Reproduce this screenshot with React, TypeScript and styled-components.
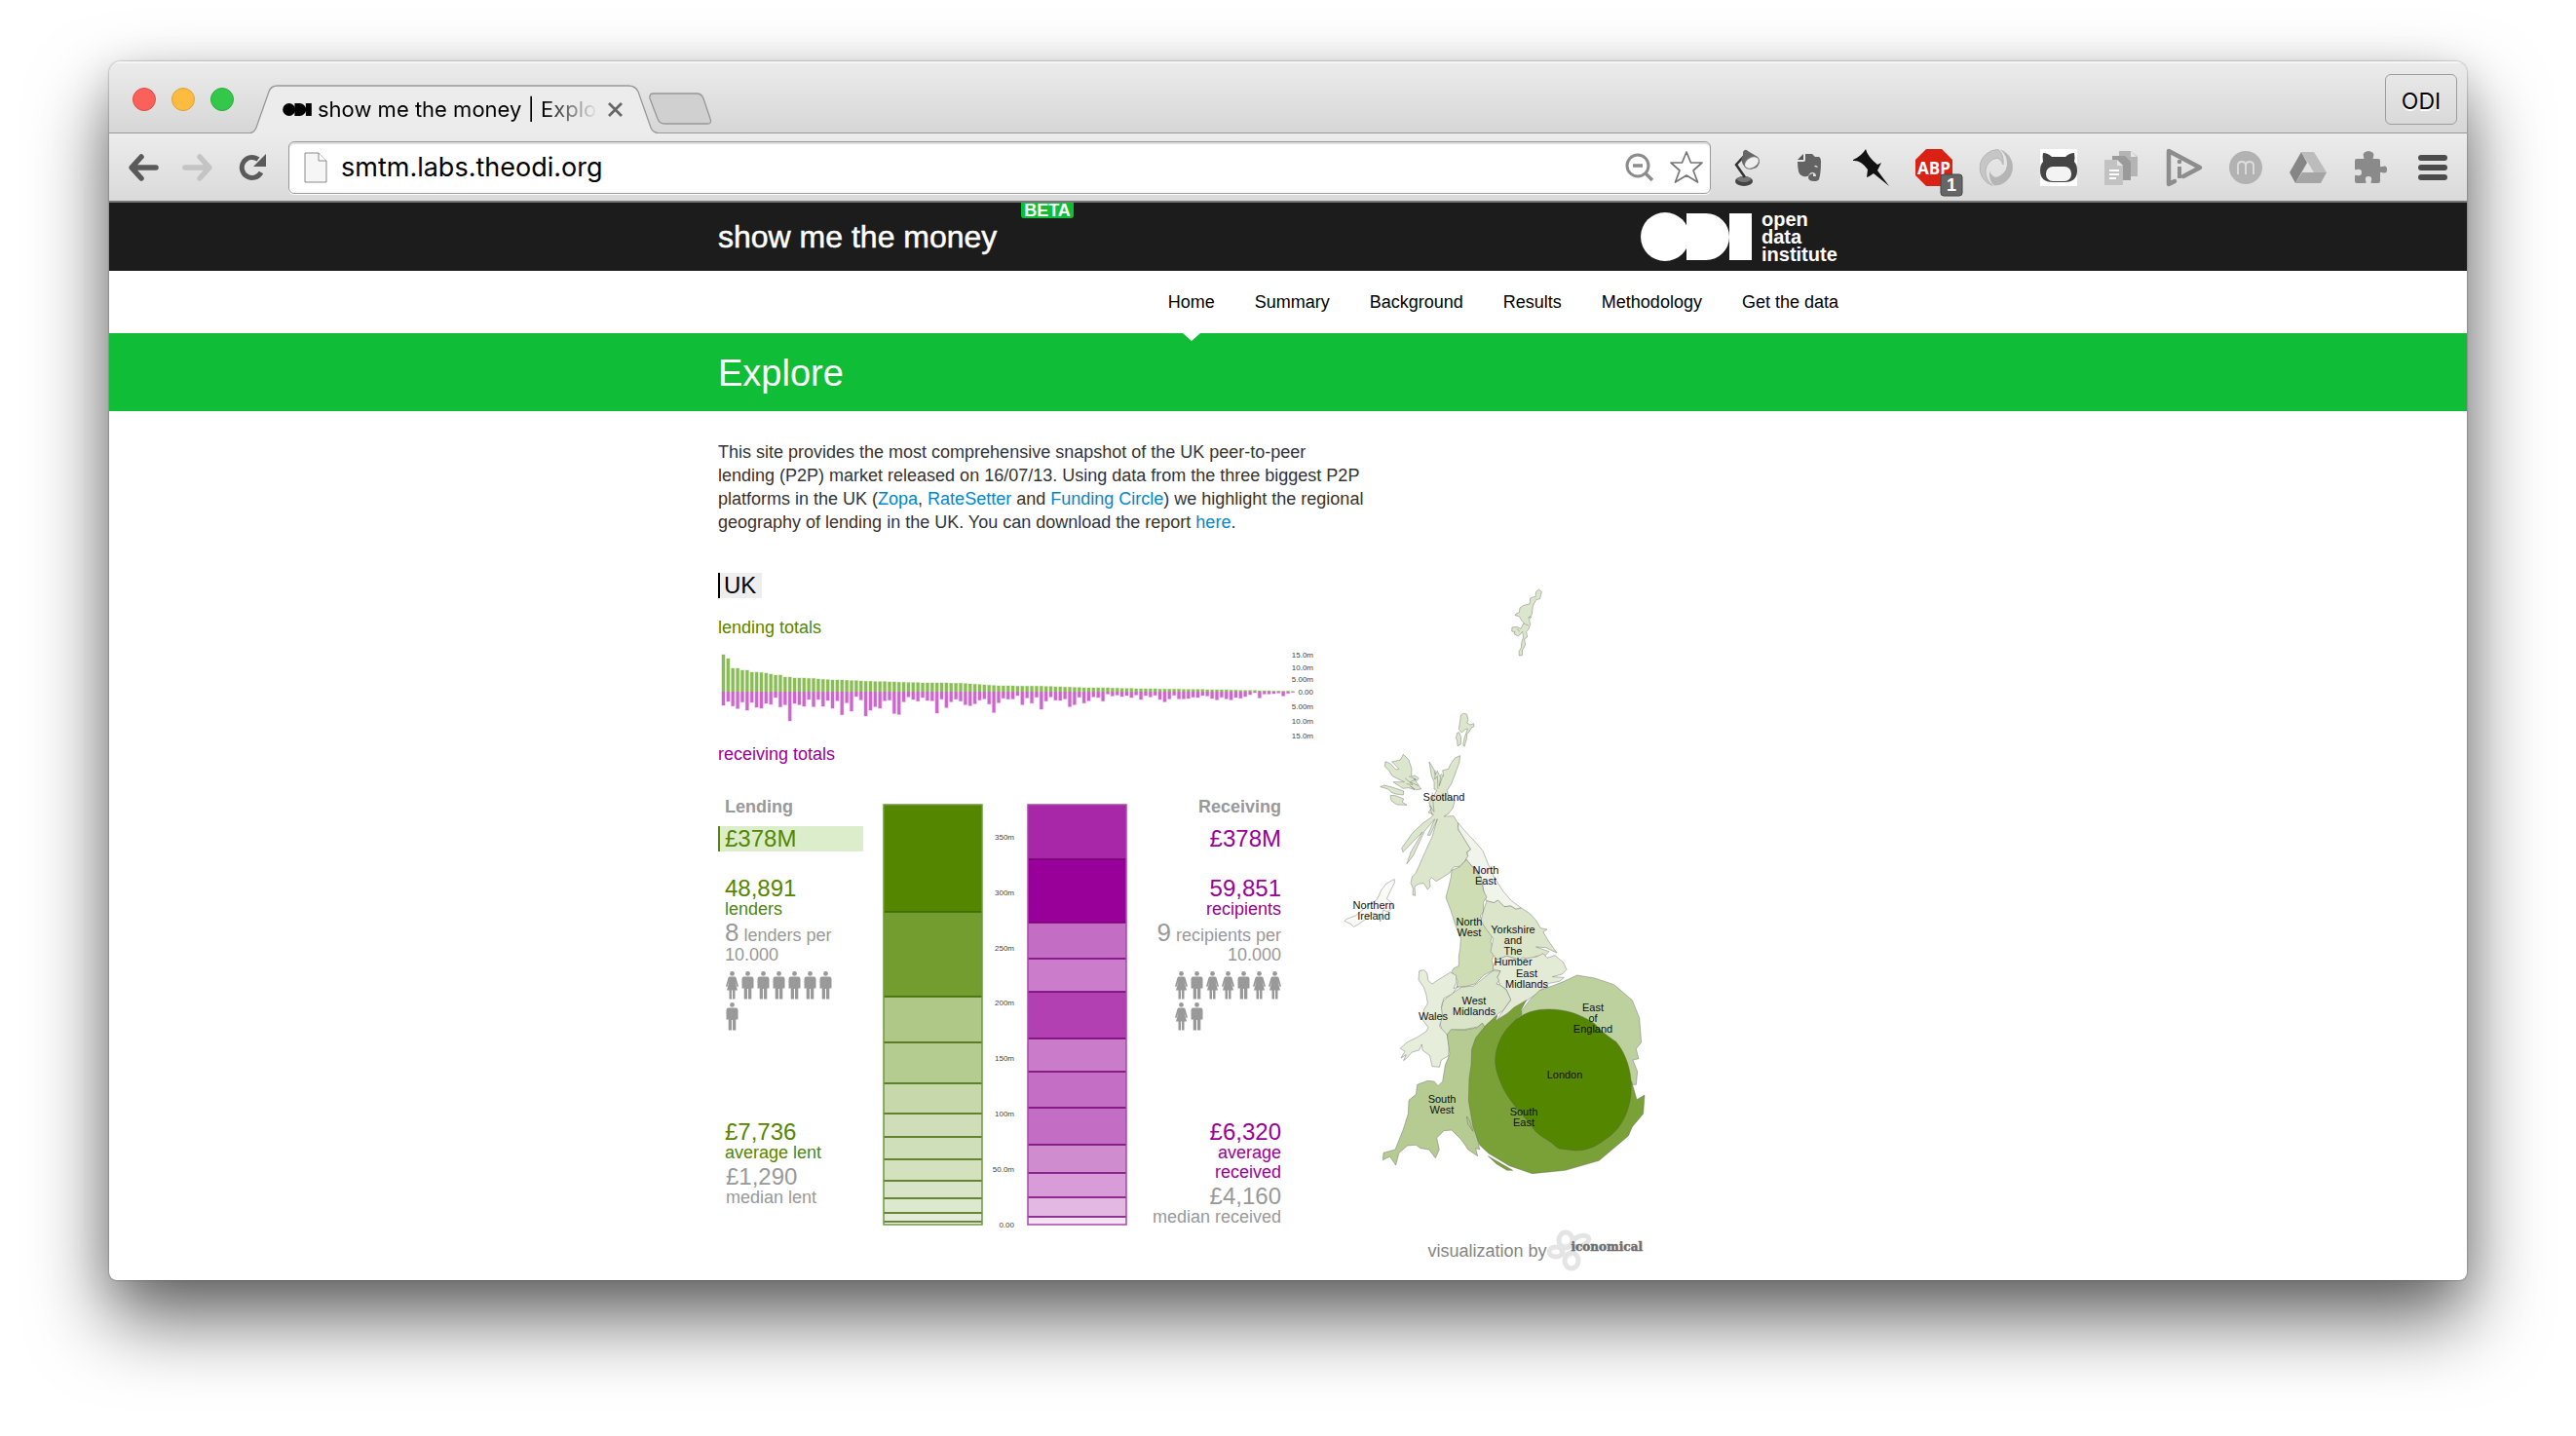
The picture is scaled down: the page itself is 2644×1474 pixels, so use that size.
import React from "react";
import styled, { createGlobalStyle } from "styled-components";

const LENT = "#558600";
const RECEIVED = "#990099";
const MUTED = "#999999";
const HELV = `"Liberation Sans", Arial, sans-serif`;
const SYSTEM = `Inter, "Liberation Sans", sans-serif`;

const GlobalStyle = createGlobalStyle`
  * { box-sizing: border-box; }
  body { margin: 0; background: #fff; font-family: ${HELV}; font-size: 18px; line-height: 24px; }
  button { border: 0; padding: 0; background: none; font: inherit; color: inherit; cursor: pointer; }
  h1, h2, h3, p { margin: 0; padding: 0; font-weight: normal; }
  a { text-decoration: none; }
`;

/* ---------- browser window ---------- */

const Desktop = styled.div`
  padding: 63px 112px 160px;
`;

const Window = styled.div`
  border-radius: 12px 12px 8px 8px;
  background: #fff;
  overflow: hidden;
  box-shadow: 0 0 2px rgba(0, 0, 0, 0.5), 0 40px 80px rgba(0, 0, 0, 0.6), 0 10px 40px rgba(0, 0, 0, 0.12);
`;

const TitleBar = styled.div`
  height: 74px;
  display: flex;
  align-items: flex-end;
  padding: 0 10px 0 24px;
  background: linear-gradient(#ececec, #d6d6d6);
  box-shadow: inset 0 2px 0 #f6f6f6, inset 0 -1px 0 #989898;
`;

const Lights = styled.div`
  display: flex;
  gap: 16px;
  align-self: center;
  padding-top: 4px;
`;

const Light = styled.button<{ $fill: string; $edge: string }>`
  width: 24px;
  height: 24px;
  border-radius: 50%;
  background: ${(p) => p.$fill};
  border: 1px solid ${(p) => p.$edge};
`;

const Tab = styled.div`
  position: relative;
  width: 420px;
  height: 50px;
  margin-left: 17px;
  display: flex;
  align-items: center;
  padding: 0 38px 0 33px;
`;

const TabShape = styled.svg`
  position: absolute;
  inset: 0;
`;

const TabTitle = styled.span`
  position: relative;
  flex: 1;
  margin-left: 6px;
  overflow: hidden;
  white-space: nowrap;
  font: 22px/30px ${SYSTEM};
  color: #000;
  mask-image: linear-gradient(90deg, #000 80%, transparent);
`;

const TabIcon = styled.svg`
  position: relative;
  flex: none;
`;

const CloseTab = styled.button`
  position: relative;
  display: flex;
  margin-left: 10px;
`;

const NewTab = styled.button`
  display: flex;
  align-self: flex-end;
  margin: 0 0 8px -12px;
`;

const ProfileButton = styled.button`
  margin: 4px 0 0 auto;
  align-self: center;
  width: 74px;
  height: 52px;
  padding-top: 4px;
  border: 1px solid #9c9c9c;
  border-radius: 6px;
  font: 23px/46px ${SYSTEM};
  text-shadow: 0 2px 0 #fff;
`;

const Toolbar = styled.div`
  height: 71px;
  display: flex;
  align-items: center;
  padding: 0 3px 0 7px;
  background: linear-gradient(#ececec, #dadada);
  border-bottom: 2px solid #777;
`;

const NavButton = styled.button`
  width: 56px;
  height: 56px;
  display: flex;
  align-items: center;
  justify-content: center;
`;

const ToolButton = styled(NavButton)`
  width: 64px;
  flex: none;
`;

const AddressBar = styled.div`
  flex: 1;
  height: 54px;
  margin: 0 5px 0 9px;
  display: flex;
  align-items: center;
  gap: 14px;
  padding: 0 6px 0 15px;
  background: #fff;
  border: 1px solid #9a9a9a;
  border-radius: 6px;
  box-shadow: inset 0 2px 1px #ddd, 0 1px 0 #fff;
`;

const AddressInput = styled.input`
  flex: 1;
  min-width: 0;
  border: 0;
  outline: 0;
  padding: 0;
  background: none;
  font: 27px/36px ${SYSTEM};
  color: #000;
`;

/* ---------- site ---------- */

const Container = styled.div`
  max-width: 1170px;
  margin: 0 auto;
`;

const Masthead = styled.header`
  background: #1c1c1c;
  color: #fff;
`;

const MastheadRow = styled(Container)`
  position: relative;
  height: 70px;
  display: flex;
  align-items: center;
  justify-content: space-between;
  padding-right: 19px;
`;

const SiteName = styled.a`
  color: #fff;
  font-size: 32px;
  line-height: 36px;
  -webkit-text-stroke: 0.5px #fff;
`;

const Beta = styled.span`
  position: absolute;
  top: 0;
  left: 311px;
  width: 54px;
  height: 16px;
  border-radius: 0 0 3px 3px;
  background: #10bd36;
  text-align: center;
  font-weight: bold;
  font-size: 18px;
  line-height: 16px;
`;

const Brand = styled.a`
  display: flex;
  align-items: center;
  gap: 10px;
  color: #fff;
`;

const BrandName = styled.span`
  width: 80px;
  font-weight: bold;
  font-size: 20px;
  line-height: 18px;
`;

const SiteNav = styled(Container).attrs({ as: "nav" })`
  height: 64px;
  display: flex;
  justify-content: flex-end;
  gap: 41px;
  padding-right: 20px;
`;

const NavLink = styled.a<{ $active?: boolean }>`
  position: relative;
  color: #000;
  line-height: 64px;
  ${(p) =>
    p.$active &&
    `&::after {
      content: "";
      position: absolute;
      top: 64px;
      left: calc(50% - 9px);
      border: 9px solid transparent;
      border-top: 8px solid #fff;
      border-bottom: 0;
    }`}
`;

const Banner = styled.div`
  background: #10bd36;
`;

const BannerTitle = styled.h1`
  max-width: 1170px;
  margin: 0 auto;
  padding-top: 2px;
  color: #fff;
  font-size: 38px;
  line-height: 78px;
`;

const Main = styled(Container).attrs({ as: "main" })`
  padding: 30px 0 8px;
`;

const Intro = styled.p`
  width: 680px;
  color: #333;
  a { color: #0088cc; }
`;

const Explorer = styled.div`
  display: grid;
  grid-template-columns: 623px 360px;
  margin-top: 32px;
`;

const Stats = styled.section`
  padding-top: 8px;
`;

const Place = styled.h2`
  display: inline-block;
  padding: 0 6px 0 4px;
  border-left: 2px solid #000;
  background: #eee;
  color: #000;
  font-size: 24px;
  line-height: 26px;
`;

const ChartTitle = styled.h3<{ $color: string }>`
  color: ${(p) => p.$color};
  font-size: 18px;
  line-height: 24px;
`;

const TotalsChart = styled.svg`
  display: block;
  margin-top: 8px;
`;

const Totals = styled.div`
  margin-top: 17px;
`;

const Panel = styled.div`
  display: grid;
  grid-template-columns: 149px 264px 149px;
  column-gap: 8px;
  margin-top: 30px;
`;

const StackChart = styled.svg`
  display: block;
  margin-top: 9px;
`;

const Column = styled.div<{ $color: string; $end?: boolean }>`
  color: ${(p) => p.$color};
  text-align: ${(p) => (p.$end ? "right" : "left")};
`;

const ColumnTitle = styled.h3`
  padding-left: 7px;
  color: ${MUTED};
  font-weight: bold;
  font-size: 18px;
  line-height: 24px;
`;

const Total = styled.div<{ $active?: boolean }>`
  margin: 8px 0 27px;
  padding-left: 5px;
  font-size: 24px;
  line-height: 26px;
  ${(p) => p.$active && `border-left: 2px solid ${LENT}; background: #dcedcb;`}
`;

const CountBlock = styled.div`
  min-height: 250px;
`;

const Figure = styled.div`
  padding-left: 7px;
  font-size: 18px;
  line-height: 20px;
`;

const MedianFigure = styled(Figure)<{ $end?: boolean }>`
  margin-top: 4px;
  padding-left: ${(p) => (p.$end ? "0" : "8px")};
  color: ${MUTED};
  white-space: nowrap;
`;

const Big = styled.span`
  display: block;
  font-size: 24px;
  line-height: 22px;
`;

const Rate = styled.div`
  margin-top: 4px;
  padding-left: 7px;
  color: ${MUTED};
  font-size: 18px;
  line-height: 20px;
  span { font-size: 26px; }
`;

const People = styled.div<{ $end?: boolean }>`
  width: 109px;
  margin: 7px 0 0 ${(p) => (p.$end ? "auto" : "8px")};
  display: flex;
  flex-wrap: wrap;
  gap: 3px;
`;

const MapArea = styled.section`
  display: flex;
  flex-direction: column;
  align-items: flex-end;
`;

const Credit = styled.a`
  display: flex;
  align-items: center;
  margin: 22px 34px 0 0;
  color: #858585;
`;

const CreditName = styled.span`
  position: relative;
  margin: -8px 0 0 -25px;
  color: #6e6e6e;
  font: bold 12px/16px "DejaVu Serif", serif;
  -webkit-text-stroke: 0.5px #6e6e6e;
`;

/* ---------- data ---------- */

const lentBars = [
  114, 102, 72, 72, 66, 66, 60, 60, 59, 57, 54, 51, 51, 45, 45, 42, 42, 42, 41, 41, 39, 38, 37, 36, 36, 36, 35, 34, 34,
  33, 32, 32, 31, 31, 31, 30, 30, 29, 29, 28, 28, 28, 27, 27, 27, 27, 27, 27, 26, 26, 26, 25, 24, 23, 22, 21, 20, 19, 18,
  18, 18, 18, 17, 17, 17, 17, 17, 17, 16, 16, 15, 15, 14, 14, 13, 13, 12, 12, 12, 12, 12, 12, 11, 11, 10, 10, 10, 9, 9, 9,
  9, 9, 8, 8, 8, 8, 8, 7, 7, 7, 7, 7, 6, 6, 6, 6, 6, 5, 5, 4, 4, 4, 4, 3, 3, 3, 2, 2, 2, 2, 1,
];

const receivedBars = [
  42, 30, 44, 52, 32, 57, 33, 48, 51, 36, 39, 18, 47, 40, 90, 36, 40, 45, 24, 46, 24, 45, 27, 51, 28, 71, 34, 60, 15, 25,
  75, 57, 46, 51, 28, 26, 67, 70, 31, 16, 24, 29, 18, 27, 28, 66, 23, 49, 31, 23, 29, 40, 43, 37, 26, 22, 38, 64, 34, 20,
  23, 22, 12, 40, 19, 35, 17, 54, 29, 16, 26, 27, 22, 46, 40, 17, 35, 28, 16, 18, 29, 7, 13, 10, 15, 12, 18, 10, 24, 12,
  16, 11, 24, 31, 22, 11, 22, 22, 21, 17, 18, 12, 13, 21, 25, 17, 22, 25, 18, 20, 15, 9, 3, 19, 7, 7, 6, 4, 13, 5, 2,
];

const totalsTicks: [string, number][] = [
  ["15.0m", 8],
  ["10.0m", 21],
  ["5.00m", 33],
  ["0.00", 46],
  ["5.00m", 61],
  ["10.0m", 76],
  ["15.0m", 91],
];

const lentStack = {
  edges: [0, 110, 197, 244, 286, 317, 341, 364, 386, 404, 419, 428, 431],
  fills: ["#558600", "#739e2f", "#afc888", "#b5cc91", "#c7d9ab", "#cfdeb9", "#cfdfba", "#d3e1bf", "#d9e5c9", "#dde9cf", "#e3ecd8", "#fbfcf8"],
};

const receivedStack = {
  edges: [0, 56, 121, 158, 192, 240, 274, 311, 349, 378, 403, 423, 431],
  fills: ["#a826a8", "#990099", "#c46dc4", "#cb7ccb", "#b240b2", "#ca7bca", "#c56ec5", "#c46dc4", "#cf8ccf", "#d89cd8", "#e3b8e3", "#f5e3f5"],
};

const stackTicks: [string, number][] = [
  ["350m", 33],
  ["300m", 90],
  ["250m", 147],
  ["200m", 203],
  ["150m", 260],
  ["100m", 317],
  ["50.0m", 374],
  ["0.00", 431],
];

const regions: { fill: string; d: string }[] = [
  { fill: "#dce6cc", d: "M658 75L667 82 662 104 650 107 643 120 640 127 637 152 626 163 636 158 629 168 632 182 627 198 620 205 623 222 614 228 617 246 608 262 607 278 598 279 597 266 604 255 606 235 611 222 608 205 603 212 594 219 582 212 585 206 575 204 576 192 590 190 603 196 612 178 606 172 598 158 585 155 588 150 598 146 600 132 612 124 630 120 632 102 642 98 648 98 650 82Z" },
  { fill: "#dce6cc", d: "M418 462L428 456 437 460 441 478 437 486 447 492 458 488 459 497 450 502 444 514 437 520 436 536 429 559 425 552 430 530 439 504 432 506 421 516 412 506 416 480Z" },
  { fill: "#dce6cc", d: "M407 517L413 515 419 530 418 552 408 557 407 540 403 534Z" },
  { fill: "#dce6cc", d: "M241 583L258 600 267 628 266 650 276 648 289 656 283 664 274 658 292 684 296 690 280 692 262 680 276 692 258 686 240 688 210 668 244 668 208 650 196 632 184 620 186 605 202 612 218 630 228 628 206 606 232 600Z" },
  { fill: "#dce6cc", d: "M170 683L182 678 206 684 242 696 241 708 222 706 204 700 194 690Z" },
  { fill: "#dce6cc", d: "M201 710L214 709 242 720 238 730 252 739 222 738 204 726Z" },
  { fill: "#dce6cc", d: "M321 606L336 630 340 645 346 634 353 650 358 644 365 650 362 632 380 628 386 614 400 594 416 587 414 606 404 634 390 672 376 694 380 712 400 724 394 748 380 766 366 774 396 773 410 796 409 814 420 828 449 876 436 884 440 898 430 912 414 928 396 930 384 948 362 962 342 974 328 962 322 970 324 990 316 999 304 980 288 982 276 990 278 1018 270 1016 271 996 264 980 268 960 278 950 288 930 308 884 330 836 346 782 324 832 316 832 338 782 306 820 272 894 252 920 264 884 300 822 240 884 236 872 270 824 300 796 328 776 334 768 318 762 328 748 320 732 330 720 344 694 336 690 336 668 328 650Z" },
  { fill: "#f1f4ea", d: "M410 794L430 818 460 850 486 880 502 920 520 960 548 1004 572 1032 604 1056 588 1060 572 1050 552 1052 532 1032 520 1040 496 1034 488 1000 480 960 456 930 434 906 440 896 438 884 449 876 418 826 410 812Z" },
  { fill: "#cfddb5", d: "M434 906L456 932 482 966 488 1004 498 1022 488 1038 488 1068 478 1080 484 1096 502 1124 516 1140 510 1160 524 1194 514 1216 520 1248 490 1262 462 1290 430 1298 406 1300 408 1280 390 1252 396 1242 412 1234 412 1204 416 1180 418 1150 402 1110 386 1060 372 1024 380 994 388 960 390 940 414 930 430 914Z" },
  { fill: "#dae5ca", d: "M498 1034L520 1040 532 1032 552 1052 572 1050 588 1060 604 1056 632 1074 650 1094 664 1118 684 1122 672 1130 688 1158 714 1194 700 1188 680 1178 650 1176 690 1190 676 1204 650 1204 632 1218 610 1208 598 1216 560 1204 530 1216 510 1190 518 1150 498 1124 480 1096 488 1064Z" },
  { fill: "#e3ebd7", d: "M530 1214L560 1204 598 1216 628 1210 652 1206 672 1196 684 1210 708 1202 734 1224 744 1246 730 1260 700 1268 736 1270 722 1282 690 1288 650 1322 616 1344 580 1370 530 1400 540 1384 572 1340 558 1306 540 1296 530 1270 540 1250 516 1244 520 1228Z" },
  { fill: "#d9e4c8", d: "M540 1250L516 1250 478 1280 458 1296 420 1300 388 1322 364 1342 356 1374 360 1392 354 1410 360 1434 378 1448 390 1432 430 1430 470 1422 484 1412 492 1424 530 1384 548 1372 572 1338 558 1308 540 1294 528 1290 536 1278 530 1270Z" },
  { fill: "#e6edda", d: "M290 1250L304 1247 314 1256 318 1280 330 1290 344 1280 370 1264 386 1254 404 1264 404 1286 396 1304 410 1298 390 1322 366 1334 358 1360 362 1390 352 1420 376 1446 382 1480 380 1512 358 1524 352 1546 330 1544 322 1510 300 1494 298 1476 290 1494 268 1500 250 1520 242 1526 250 1508 234 1518 246 1498 232 1488 252 1470 284 1454 312 1436 318 1424 300 1400 304 1370 316 1350 312 1324 304 1300 288 1278Z" },
  { fill: "#b5cb91", d: "M376 1446L388 1430 430 1432 470 1424 484 1410 492 1424 530 1390 480 1440 458 1490 452 1550 452 1640 460 1700 470 1770 476 1800 464 1796 470 1820 440 1800 434 1790 420 1770 390 1740 366 1742 344 1764 352 1800 340 1826 320 1800 294 1796 280 1786 254 1788 228 1810 218 1848 200 1822 178 1832 180 1810 216 1800 240 1740 256 1690 258 1648 280 1630 284 1600 316 1588 336 1590 348 1604 362 1590 370 1540 384 1506Z" },
  { fill: "#bdd19e", d: "M630 1340L660 1310 700 1296 736 1282 776 1263 830 1272 890 1292 946 1340 968 1394 974 1470 958 1490 966 1520 948 1524 962 1560 958 1600 948 1600 900 1640 700 1700 560 1500 570 1430 600 1380Z" },
  { fill: "#7aa137", d: "M620 1340L604 1370 606 1384 592 1394 580 1412 574 1424 640 1380 944 1590 960 1646 984 1632 980 1690 946 1730 934 1758 844 1834 740 1864 638 1874 568 1850 504 1812 476 1786 456 1730 442 1650 444 1580 450 1540 452 1490 464 1456 496 1416 530 1386 526 1404 560 1382 582 1362Z" },
  { fill: "#7aa137", d: "M502 1820L530 1836 578 1864 560 1864 528 1844Z" },
  { fill: "#b5cb91", d: "M436 1698L444 1708 456 1744 440 1722Z" },
  { fill: "#558600", d: "M690 1368C740 1368 785 1382 830 1412C850 1435 870 1450 896 1468C928 1505 943 1560 943 1605C943 1680 910 1740 865 1767C830 1795 800 1803 770 1803L720 1797 710 1790C692 1770 668 1766 645 1740C610 1690 580 1670 548 1610C530 1570 524 1545 524 1525C526 1480 545 1440 575 1412C610 1376 650 1368 690 1368Z" },
  { fill: "#fafaf6", d: "M208 970L214 968 214 978 200 1006 190 1028 206 1040 208 1056 192 1068 180 1062 170 1098 164 1076 150 1072 120 1094 100 1108 88 1114 80 1106 60 1096 66 1090 94 1080 106 1070 130 1050 160 1030 174 1000 188 982Z" },
];

const regionLabels: { lines: string[]; x: number; y: number }[] = [
  { lines: ["Scotland"], x: 122, y: 242 },
  { lines: ["North", "East"], x: 165, y: 317 },
  { lines: ["Northern", "Ireland"], x: 50, y: 353 },
  { lines: ["North", "West"], x: 148, y: 370 },
  { lines: ["Yorkshire", "and", "The", "Humber"], x: 193, y: 378 },
  { lines: ["East", "Midlands"], x: 207, y: 423 },
  { lines: ["West", "Midlands"], x: 153, y: 451 },
  { lines: ["Wales"], x: 111, y: 467 },
  { lines: ["East", "of", "England"], x: 275, y: 458 },
  { lines: ["London"], x: 246, y: 527 },
  { lines: ["South", "West"], x: 120, y: 552 },
  { lines: ["South", "East"], x: 204, y: 565 },
];

/* ---------- drawings ---------- */

const Person = ({ woman }: { woman?: boolean }) => (
  <svg width="13" height="29" viewBox="0 0 13 29" fill={MUTED} aria-hidden="true">
    <circle cx="6.5" cy="2.4" r="2.4" />
    {woman ? (
      <path d="M3.500 5.500h6l1 1L13 15.500l-1.400.6L9.500 10l2.500 9.500H9.500V28.500H7V19.500H6v9H3.500v-9H1L3.500 10 1.400 16.100 0 15.500 2.500 6.500z" />
    ) : (
      <path d="M2.500 5.500h8Q12.500 5.500 12.500 8v9.500h-2.200V28.500H7V18H6v10.500H2.700V17.500H.5V8q0-2.500 2-2.500z" />
    )}
  </svg>
);

const Crowd = ({ pattern, end }: { pattern: string; end?: boolean }) => (
  <People $end={end}>
    {pattern.split("").map((c, i) => (
      <Person key={i} woman={c === "w"} />
    ))}
  </People>
);

const TotalsBars = () => (
  <TotalsChart width="614" height="98" role="img" aria-label="Lending and receiving totals by region">
    {lentBars.map((h, i) => {
      const x = 4 + i * 4.87;
      return (
        <g key={i}>
          <rect x={x - 0.7} y={46 - h / 3 - 0.5} width="4.400" height={h / 3 + 0.5} fill="#8abc55" opacity="0.35" />
          <rect x={x} y={46 - h / 3} width="3" height={h / 3} fill="#8abc55" />
          <rect x={x - 0.7} y="46" width="4.400" height={receivedBars[i] / 3 + 0.5} fill="#cc66cc" opacity="0.35" />
          <rect x={x} y="46" width="3" height={receivedBars[i] / 3} fill="#cc66cc" />
        </g>
      );
    })}
    {totalsTicks.map(([label, y], i) => (
      <text key={i} x="611" y={y + 3} textAnchor="end" fill="#444" fontSize="8" fontFamily={HELV}>
        {label}
      </text>
    ))}
  </TotalsChart>
);

const Stack = ({ x, edges, fills, line, side }: { x: number; edges: number[]; fills: string[]; line: string; side: string }) => (
  <g>
    {fills.map((fill, i) => (
      <rect key={i} x={x} y={edges[i] + 1} width="101" height={edges[i + 1] - edges[i]} fill={fill} />
    ))}
    {edges.slice(1, -1).map((y) => (
      <path key={y} d={`M${x} ${y + 1}h101`} stroke={line} strokeWidth="1.300" />
    ))}
    <rect x={x} y="1" width="101" height="431" fill="none" stroke={side} strokeWidth="1.500" />
  </g>
);

const Stacks = () => (
  <StackChart width="264" height="440" role="img" aria-label="Breakdown of lending and receiving by region">
    <Stack x={13} {...lentStack} line="#3f6400" side="#6f9640" />
    <Stack x={161} {...receivedStack} line="#730073" side="#a54aa5" />
    {stackTicks.map(([label, y]) => (
      <text key={label} x="147" y={y + 4} textAnchor="end" fill="#444" fontSize="8" fontFamily={HELV}>
        {label}
      </text>
    ))}
  </StackChart>
);

const UkMap = () => (
  <svg width="360" height="660" viewBox="0 0 360 660" role="img" aria-label="Map of lending by UK region">
    <g transform="scale(.33333)" stroke="#555" strokeOpacity="0.45" strokeWidth="2.500" strokeLinejoin="round">
      {regions.map((r, i) => (
        <path key={i} d={r.d} fill={r.fill} />
      ))}
      <path fill="none" d="M340 632L338 660 346 650 348 690M356 650L352 680 362 650M330 700L336 760 322 740 330 770M258 650L280 660 262 668 288 680M246 656L270 676 250 674M590 196L600 205M612 180L626 186" />
    </g>
    <g fill="#111" fontSize="11" fontFamily={HELV} textAnchor="middle">
      {regionLabels.map((l) => (
        <text key={l.lines.join()} y={l.y}>
          {l.lines.map((t, i) => (
            <tspan key={t} x={l.x} dy={i ? 11 : 0}>
              {t}
            </tspan>
          ))}
        </text>
      ))}
    </g>
  </svg>
);

const OdiMark = ({ w, color }: { w: number; color: string }) => (
  <svg width={w} height={(w * 50) / 114} viewBox="0 0 114 50" fill={color} aria-hidden="true">
    <circle cx="25" cy="25" r="25" />
    <path d="M47 1H67A24 24 0 0 1 67 49H47zM91 1h23v48H91z" />
  </svg>
);

const extensions: { name: string; art: React.ReactNode }[] = [
  {
    name: "Lamp",
    art: (
      <>
        <ellipse cx="17" cy="34" rx="9" ry="5" fill="#444" />
        <ellipse cx="17" cy="32" rx="7" ry="3" fill="#777" />
        <path d="M18 30L9 17 20 5" stroke="#333" strokeWidth="2.500" fill="none" />
        <path d="M16 4q2-4 5-1l10 6q4 6-1 11-9 4-14-3-3-6 0-9z" fill="#666" />
        <ellipse cx="25" cy="15" rx="8" ry="5.500" fill="#eee" stroke="#777" transform="rotate(-30 25 15)" />
      </>
    ),
  },
  {
    name: "Evernote",
    art: (
      <>
        <path d="M16 6h7l3 3h4q2 1 2 5 0 12-2 18-1 2-5 2-6 0-6-4 0-3 5-4v3h3q0-4-4-4-2 0-3 2-1 3-6 2-4-1-5-5-1-5-1-10h6q2 0 2-2z" fill="#636363" />
        <path d="M8 12l6-6v6z" fill="#555" />
        <path d="M25 19q2-3 4 1z" fill="#ddd" />
      </>
    ),
  },
  { name: "Pin", art: <path d="M1 12Q10 8 14 1q2 8 12 16l4-2-4 8 12 16-16-13q-4 3-7 4l1-8Q9 12 1 13z" fill="#111" /> },
  {
    name: "Adblock Plus",
    art: (
      <>
        <path d="M12 1h16l11 11v16L28 39H12L1 28V12z" fill="#d92214" />
        <text x="20" y="27" textAnchor="middle" fontFamily={`"Open Sans", sans-serif`} fontWeight="bold" fontSize="17" fill="#fff">ABP</text>
        <rect x="27" y="27" width="22" height="22" rx="3" fill="#666" stroke="#444" />
        <text x="38" y="44" textAnchor="middle" fontFamily={HELV} fontWeight="bold" fontSize="18" fill="#fff">1</text>
      </>
    ),
  },
  {
    name: "Ring",
    art: (
      <>
        <path d="M22 1.500A19 19 0 0 0 16 38.500Q8 32 9 22 11 12 21 10q5 2 6 7Q28 6 22 1.500z" fill="#c6c6c6" stroke="#b4b4b4" />
        <path d="M18 38.500A19 19 0 0 0 24 1.500Q32 8 31 18 29 28 19 30q-5-2-6-7-1 11 5 15.500z" fill="#b5b5b5" />
      </>
    ),
  },
  {
    name: "Octocat",
    art: (
      <>
        <path d="M1 1h38v38H1z" fill="#fff" />
        <path d="M4 5q5 0 9 4h14q4-4 9-4 1 5 0 9 3 3 3 9 0 12-13 12H14Q1 35 1 23q0-6 3-9-1-5 0-9z" fill="#444" />
        <rect x="7" y="19" width="26" height="15" rx="7" fill="#f3f3f3" />
      </>
    ),
  },
  {
    name: "Copy",
    art: (
      <>
        <path d="M18 3h12l7 6v20H18z" fill="#b4b4b4" />
        <path d="M11 8h13l6 6v19H11z" fill="#9a9a9a" />
        <path d="M3 12h13l6 6v20H3z" fill="#c2c2c2" />
        <path d="M16 12v6h6M30 3v6h6" fill="#e6e6e6" />
        <path d="M8 23h10M8 27h10M8 31h7" stroke="#fff" strokeWidth="1.800" />
      </>
    ),
  },
  {
    name: "Play info",
    art: (
      <>
        <path d="M11 34L5 37V3L37 20 20 29" fill="none" stroke="#8d8d8d" strokeWidth="4.500" strokeLinejoin="round" strokeLinecap="round" />
        <path d="M16 19v12" stroke="#8d8d8d" strokeWidth="4" />
        <circle cx="16" cy="14" r="2.300" fill="#8d8d8d" />
      </>
    ),
  },
  {
    name: "M",
    art: (
      <>
        <circle cx="20" cy="20" r="17" fill="#b2b2b2" />
        <path d="M12 27V18q0-4 4-4t4 4v9M20 18q0-4 4-4t4 4v9" fill="none" stroke="#dedede" strokeWidth="1.800" />
      </>
    ),
  },
  {
    name: "Drive",
    art: (
      <>
        <path d="M13 4L1 25l6 11 12-21z" fill="#868686" />
        <path d="M13 4h13l13 21H26z" fill="#bcbcbc" />
        <path d="M14 25h25l-6 11H7z" fill="#a5a5a5" />
      </>
    ),
  },
  {
    name: "Extension",
    art: (
      <path
        d="M4 13q0-2 2-2h7q1 0 0-2-2-5 5-6 7 1 5 6-1 2 0 2h5q2 0 2 2v5q0 2 2 1 5-2 5 3t-5 3q-2-1-2 1v8q0 2-2 2h-7q-1 0 0-3 1-4-3-4t-3 4q1 3 0 3H6q-2 0-2-2v-5q0-2 2-1 5 1 5-3t-5-3q-2 1-2-1z"
        fill="#8a8a8a"
      />
    ),
  },
  {
    name: "Menu",
    art: <path d="M8 10h24M8 20h24M8 30h24" stroke="#4c4c4c" strokeWidth="6" strokeLinecap="round" />,
  },
];

/* ---------- page ---------- */

export default function App() {
  return (
    <Desktop>
      <GlobalStyle />
      <Window>
        <TitleBar>
          <Lights>
            <Light aria-label="Close" $fill="#fc605b" $edge="#dd4a44" />
            <Light aria-label="Minimise" $fill="#fdbc40" $edge="#dea034" />
            <Light aria-label="Zoom" $fill="#34c84a" $edge="#29ab38" />
          </Lights>
          <Tab>
            <TabShape width="420" height="50" viewBox="0 0 420 50">
              <path d="M0 50Q4 49 6 44L19 7Q21 1 28 1H388Q395 1 398 7L411 44Q413 49 418 50z" fill="#ececec" />
              <path d="M0 49.500Q4 49 6 44L19 7Q21 1 28 1H388Q395 1 398 7L411 44Q413 49 418 49.500" fill="none" stroke="#989898" strokeWidth="1.300" />
            </TabShape>
            <TabIcon width="30" height="13" viewBox="0 0 114 50" aria-hidden="true">
              <circle cx="25" cy="25" r="25" />
              <path d="M47 0H67A25 25 0 0 1 67 50H47zM91 0h23v50H91z" />
            </TabIcon>
            <TabTitle>show me the money | Explore</TabTitle>
            <CloseTab aria-label="Close tab">
              <svg width="15" height="15" viewBox="0 0 15 15" stroke="#666" strokeWidth="2.800">
                <path d="M1 1l13 13M14 1L1 14" />
              </svg>
            </CloseTab>
          </Tab>
          <NewTab aria-label="New tab">
            <svg width="66" height="34" viewBox="0 0 66 34">
              <path d="M6 1H50Q55 1 57 6L64 27Q66 32 61 32H17Q12 32 10 27L2 6Q1 1 6 1z" fill="#d0d0d0" stroke="#979797" strokeWidth="1.300" />
            </svg>
          </NewTab>
          <ProfileButton>ODI</ProfileButton>
        </TitleBar>
        <Toolbar>
          <NavButton aria-label="Back">
            <svg width="34" height="30" viewBox="0 0 34 30" fill="none" stroke="#5a5a5a" strokeWidth="5.500" strokeLinecap="round" strokeLinejoin="round">
              <path d="M15 4L5 15 15 26M6 15H30" />
            </svg>
          </NavButton>
          <NavButton aria-label="Forward">
            <svg width="34" height="30" viewBox="0 0 34 30" fill="none" stroke="#c4c4c4" strokeWidth="5.500" strokeLinecap="round" strokeLinejoin="round">
              <path d="M19 4L29 15 19 26M28 15H4" />
            </svg>
          </NavButton>
          <NavButton aria-label="Reload">
            <svg width="30" height="30" viewBox="0 0 30 30">
              <path d="M24 20A10.500 10.500 0 1 1 21 6.500" fill="none" stroke="#5a5a5a" strokeWidth="5" />
              <path d="M29 1v13H16z" fill="#5a5a5a" />
            </svg>
          </NavButton>
          <AddressBar>
            <svg width="24" height="32" viewBox="0 0 24 32" fill="#f6f6f6" stroke="#8a8a8a" aria-hidden="true">
              <path d="M1 1H15L23 9V31H1z" />
              <path d="M15 1V9H23" fill="#fff" />
            </svg>
            <AddressInput aria-label="Address" defaultValue="smtm.labs.theodi.org" />
            <svg width="32" height="32" viewBox="0 0 32 32" fill="none" stroke="#8c8c8c" aria-hidden="true">
              <circle cx="14" cy="14" r="11" strokeWidth="3" />
              <path d="M9 14h10M22 22l7 7" strokeWidth="3.500" />
            </svg>
            <svg width="36" height="36" viewBox="0 0 36 36" aria-hidden="true">
              <path d="M18 2l4.500 11H34l-9 8 4.500 12L18 26 6.500 33 11 21 2 13h11.500z" fill="#fff" stroke="#777" strokeWidth="1.700" strokeLinejoin="round" />
            </svg>
          </AddressBar>
          {extensions.map((e) => (
            <ToolButton key={e.name} aria-label={e.name}>
              <svg width="40" height="40" viewBox="0 0 40 40" overflow="visible">
                {e.art}
              </svg>
            </ToolButton>
          ))}
        </Toolbar>

        <Masthead>
          <MastheadRow>
            <SiteName href="#">show me the money</SiteName>
            <Beta>BETA</Beta>
            <Brand href="#">
              <OdiMark w={114} color="#fff" />
              <BrandName>open data institute</BrandName>
            </Brand>
          </MastheadRow>
        </Masthead>
        <SiteNav>
          <NavLink href="#" $active>Home</NavLink>
          <NavLink href="#">Summary</NavLink>
          <NavLink href="#">Background</NavLink>
          <NavLink href="#">Results</NavLink>
          <NavLink href="#">Methodology</NavLink>
          <NavLink href="#">Get the data</NavLink>
        </SiteNav>
        <Banner>
          <BannerTitle>Explore</BannerTitle>
        </Banner>

        <Main>
          <Intro>
            This site provides the most comprehensive snapshot of the UK peer-to-peer
            <br />
            lending (P2P) market released on 16/07/13. Using data from the three biggest P2P
            <br />
            platforms in the UK (<a href="#">Zopa</a>, <a href="#">RateSetter</a> and <a href="#">Funding Circle</a>) we
            highlight the regional
            <br />
            geography of lending in the UK. You can download the report <a href="#">here</a>.
          </Intro>
          <Explorer>
            <Stats>
              <Place>UK</Place>
              <Totals>
                <ChartTitle $color={LENT}>lending totals</ChartTitle>
                <TotalsBars />
                <ChartTitle $color={RECEIVED}>receiving totals</ChartTitle>
              </Totals>
              <Panel>
                <Column $color={LENT}>
                  <ColumnTitle>Lending</ColumnTitle>
                  <Total $active>£378M</Total>
                  <CountBlock>
                    <Figure><Big>48,891</Big>lenders</Figure>
                    <Rate><span>8</span> lenders per<br />10.000</Rate>
                    <Crowd pattern="wmmmmmmm" />
                  </CountBlock>
                  <Figure><Big>£7,736</Big>average lent</Figure>
                  <MedianFigure><Big>£1,290</Big>median lent</MedianFigure>
                </Column>
                <Stacks />
                <Column $color={RECEIVED} $end>
                  <ColumnTitle>Receiving</ColumnTitle>
                  <Total>£378M</Total>
                  <CountBlock>
                    <Figure><Big>59,851</Big>recipients</Figure>
                    <Rate><span>9</span> recipients per<br />10.000</Rate>
                    <Crowd pattern="wmwwmwwwm" end />
                  </CountBlock>
                  <Figure><Big>£6,320</Big>average<br />received</Figure>
                  <MedianFigure $end><Big>£4,160</Big>median received</MedianFigure>
                </Column>
              </Panel>
            </Stats>
            <MapArea>
              <UkMap />
              <Credit href="#">
                visualization by
                <svg width="50" height="44" viewBox="0 0 50 44" fill="none" stroke="#e4e4e4" strokeWidth="5" aria-hidden="true">
                  <ellipse cx="19" cy="11" rx="7" ry="8" />
                  <ellipse cx="34" cy="12" rx="9" ry="5" transform="rotate(-20 34 12)" />
                  <ellipse cx="9" cy="23" rx="7" ry="5" />
                  <ellipse cx="25" cy="32" rx="7" ry="8" />
                  <circle cx="20" cy="22" r="7" strokeWidth="1" />
                </svg>
                <CreditName>iconomical</CreditName>
              </Credit>
            </MapArea>
          </Explorer>
        </Main>
      </Window>
    </Desktop>
  );
}
